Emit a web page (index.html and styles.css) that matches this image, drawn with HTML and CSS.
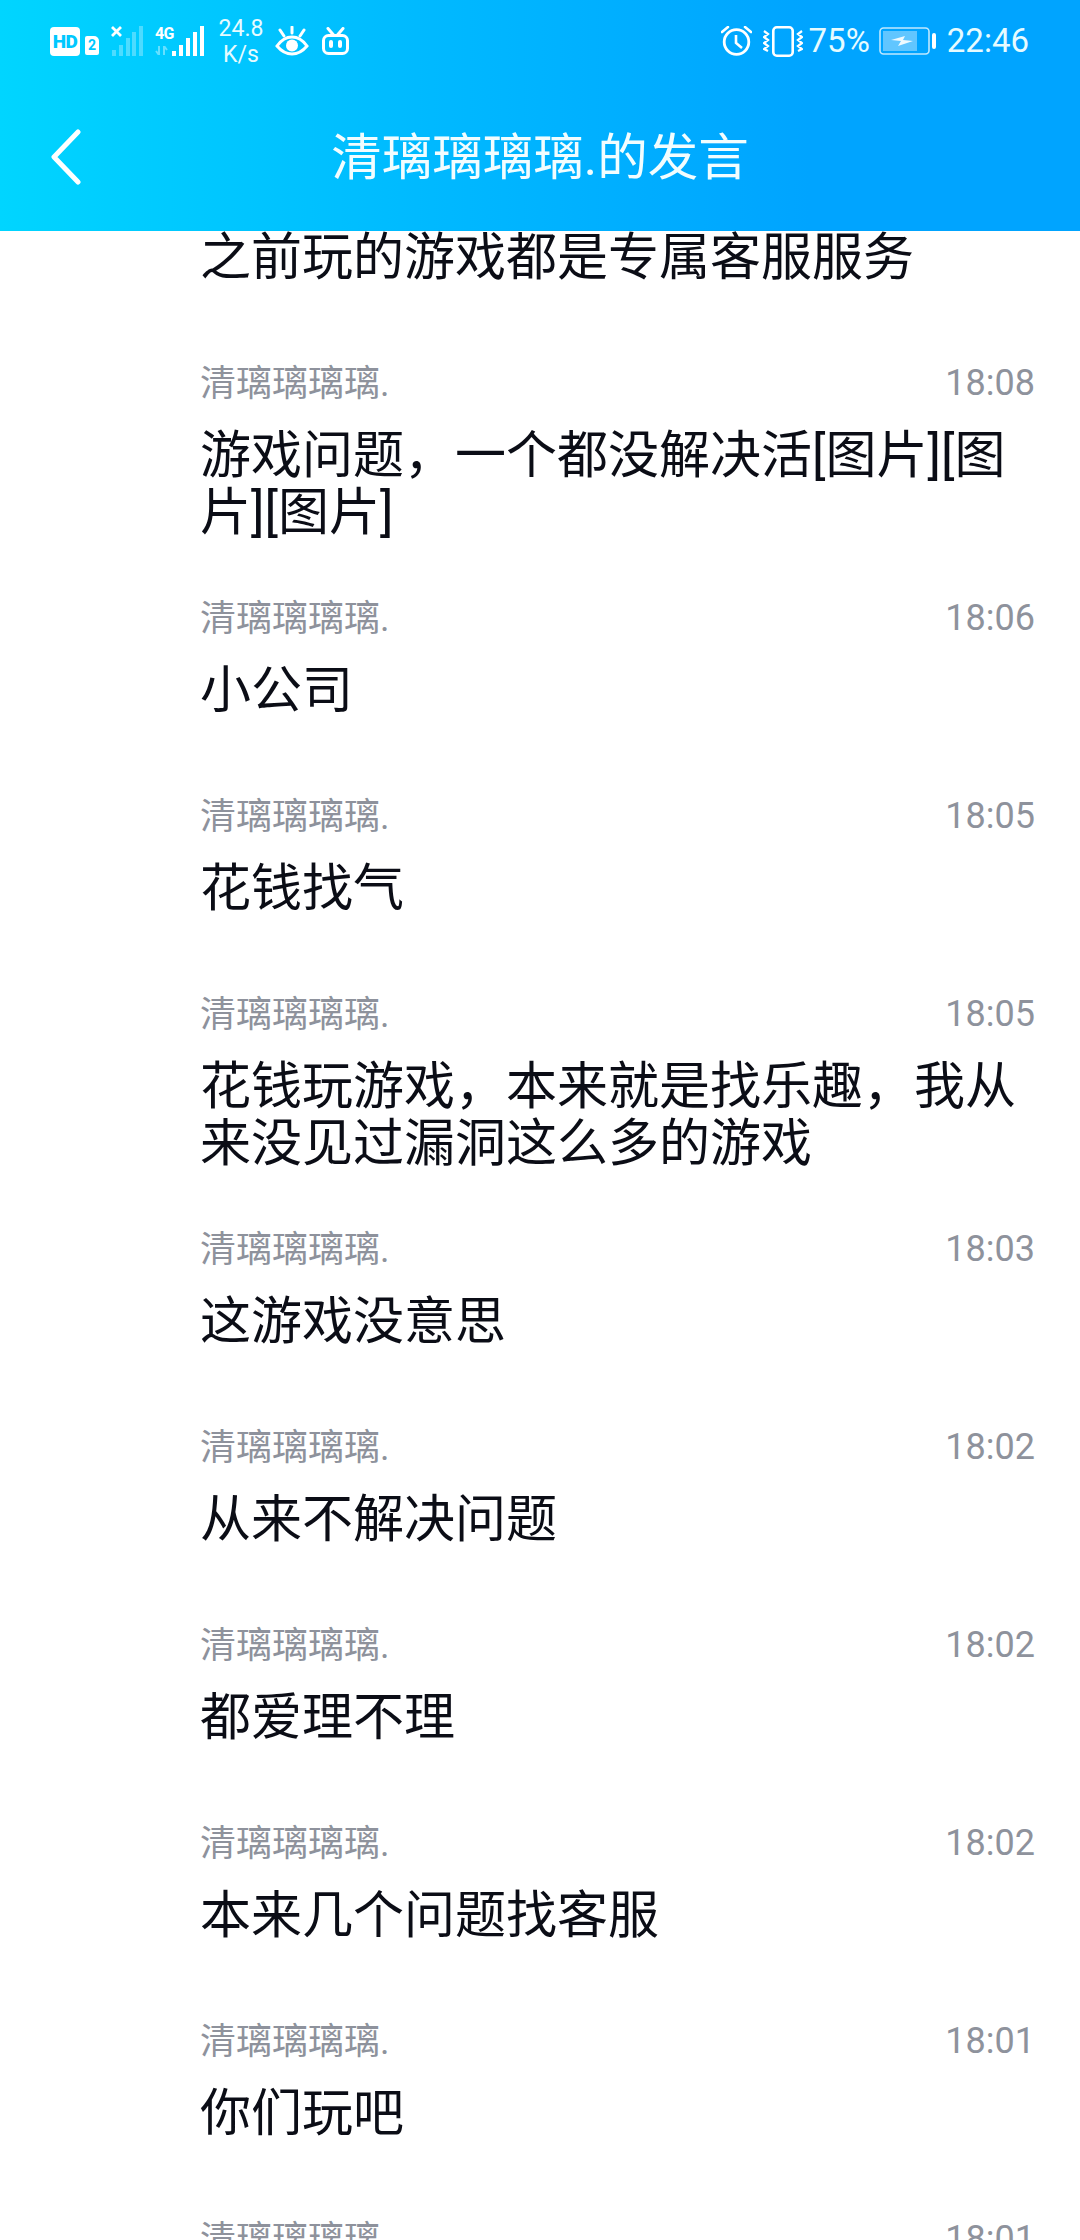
FILE: index.html
```html
<!DOCTYPE html>
<html lang="zh-CN">
<head>
<meta charset="utf-8">
<title>清璃璃璃璃.的发言</title>
<link rel="stylesheet" href="styles.css">
</head>
<body>
<div class="screen">
  <header class="header">
    <div class="status">
      <div class="status-left">
        <span class="hd">HD</span>
        <span class="sim">2</span>
        <svg class="sig1" width="32" height="30" viewBox="0 0 32 30">
          <path d="M1 1l9 9M10 1l-9 9" stroke="#fff" stroke-width="2.8" fill="none"/>
          <g fill="#fff" opacity=".3">
            <rect x="1" y="24" width="4" height="6"/><rect x="8" y="19" width="4" height="11"/><rect x="15" y="12" width="4" height="18"/><rect x="21" y="6" width="4" height="24"/><rect x="28" y="0" width="4" height="30"/>
          </g>
        </svg>
        <div class="sig2">
          <span class="fourg">4G</span>
          <svg class="arrows" width="14" height="9" viewBox="0 0 14 9"><path d="M4 0v9M1 5l3 4M9 9V0M9 0l3 4" stroke="#fff" stroke-width="2" fill="none" opacity=".4"/></svg>
        </div>
        <svg class="bars" width="32" height="30" viewBox="0 0 32 30">
          <g fill="#fff"><rect x="0" y="25" width="4" height="5"/><rect x="7" y="19" width="4" height="11"/><rect x="14" y="12" width="4" height="18"/><rect x="21" y="6" width="4" height="24"/><rect x="28" y="0" width="4" height="30"/></g>
        </svg>
        <div class="speed"><span>24.8</span><span>K/s</span></div>
        <svg class="eye" width="34" height="30" viewBox="0 0 34 30">
          <path d="M2 20C7 13 12 11 17 11s10 2 15 9c-5 6-10 8-15 8S7 26 2 20z" fill="none" stroke="#fff" stroke-width="3"/>
          <circle cx="17" cy="19.5" r="6" fill="#fff"/>
          <path d="M17 1v6M5 4l4 6M29 4l-4 6" stroke="#fff" stroke-width="3" fill="none" stroke-linecap="round"/>
        </svg>
        <svg class="bili" width="27" height="28" viewBox="0 0 27 28">
          <rect x="1.5" y="8.5" width="24" height="18" rx="5" fill="none" stroke="#fff" stroke-width="3"/>
          <path d="M6 1.5l6 7M21 1.5l-6 7" stroke="#fff" stroke-width="3" fill="none" stroke-linecap="round"/>
          <rect x="7" y="13" width="4" height="8" rx="2" fill="#fff"/><rect x="16" y="13" width="4" height="8" rx="2" fill="#fff"/>
        </svg>
      </div>
      <div class="status-right">
        <svg class="alarm" width="31" height="30" viewBox="0 0 31 30">
          <circle cx="15.5" cy="16" r="12.3" fill="none" stroke="#fff" stroke-width="2.8"/>
          <path d="M15 9v8l6 5" fill="none" stroke="#fff" stroke-width="2.6"/>
          <path d="M1 6l6-5M30 6l-6-5" stroke="#fff" stroke-width="2.6" fill="none" stroke-linecap="round"/>
        </svg>
        <svg class="vibrate" width="40" height="31" viewBox="0 0 40 31">
          <rect x="10.3" y="1.3" width="19.4" height="28.4" rx="3.5" fill="none" stroke="#fff" stroke-width="2.6"/>
          <path d="M1 5l4 3-4 3 4 3-4 3 4 3-4 3 4 2M39 5l-4 3 4 3-4 3 4 3-4 3 4 3-4 2" fill="none" stroke="#fff" stroke-width="2.2"/>
        </svg>
        <span class="pct">75%</span>
        <svg class="battery" width="58" height="28" viewBox="0 0 58 28">
          <rect x="1" y="1" width="49" height="26" rx="3.5" fill="none" stroke="#fff" stroke-opacity=".75" stroke-width="1.6"/>
          <rect x="4" y="4" width="34" height="20" fill="#fff" fill-opacity=".38"/>
          <path d="M12 13l14-4-2 4 10 1-15 5 3-5z" fill="#fff" fill-opacity=".9"/>
          <rect x="53" y="6" width="4" height="16" rx="2" fill="#fff"/>
        </svg>
        <span class="clock">22:46</span>
      </div>
    </div>
    <div class="titlebar">
      <svg class="back" width="30" height="56" viewBox="0 0 30 56">
        <path d="M27 3L3 28l24 25" fill="none" stroke="#fff" stroke-width="5" stroke-linecap="round" stroke-linejoin="round"/>
      </svg>
      <h1 class="title">清璃璃璃璃.的发言</h1>
    </div>
  </header>

  <main class="list">
    <article class="row row-first"><p class="text">之前玩的游戏都是专属客服服务</p></article>
    <article class="row"><div class="meta"><span class="name">清璃璃璃璃.</span><time class="time">18:08</time></div><p class="text">游戏问题，一个都没解决活[图片][图片][图片]</p></article>
    <article class="row"><div class="meta"><span class="name">清璃璃璃璃.</span><time class="time">18:06</time></div><p class="text">小公司</p></article>
    <article class="row"><div class="meta"><span class="name">清璃璃璃璃.</span><time class="time">18:05</time></div><p class="text">花钱找气</p></article>
    <article class="row"><div class="meta"><span class="name">清璃璃璃璃.</span><time class="time">18:05</time></div><p class="text">花钱玩游戏，本来就是找乐趣，我从来没见过漏洞这么多的游戏</p></article>
    <article class="row"><div class="meta"><span class="name">清璃璃璃璃.</span><time class="time">18:03</time></div><p class="text">这游戏没意思</p></article>
    <article class="row"><div class="meta"><span class="name">清璃璃璃璃.</span><time class="time">18:02</time></div><p class="text">从来不解决问题</p></article>
    <article class="row"><div class="meta"><span class="name">清璃璃璃璃.</span><time class="time">18:02</time></div><p class="text">都爱理不理</p></article>
    <article class="row"><div class="meta"><span class="name">清璃璃璃璃.</span><time class="time">18:02</time></div><p class="text">本来几个问题找客服</p></article>
    <article class="row"><div class="meta"><span class="name">清璃璃璃璃.</span><time class="time">18:01</time></div><p class="text">你们玩吧</p></article>
    <article class="row"><div class="meta"><span class="name">清璃璃璃璃.</span><time class="time">18:01</time></div></article>
  </main>
</div>
</body>
</html>
```
FILE: styles.css
```css
* { box-sizing: border-box; }
html, body { margin: 0; padding: 0; background: #fff; }
body { font-family: Roboto, "Noto Sans CJK SC", sans-serif; }
.screen { width: 1080px; height: 2240px; overflow: hidden; display: flex; flex-direction: column; }

.header {
  position: relative;
  z-index: 2;
  flex: none;
  height: 231px;
  background: linear-gradient(90deg, #00d5ff 0%, #00b9ff 40%, #00a4ff 75%, #00a4ff 100%);
  color: #fff;
}
.status { height: 80px; padding: 19px 51px 0 50px; display: flex; justify-content: space-between; align-items: flex-start; }
.status-left, .status-right { display: flex; align-items: center; height: 44px; }
.status-left svg, .status-right svg { flex: none; display: block; }

.hd {
  width: 30px; height: 29px; border-radius: 4px; background: #fff; color: #00c8ff;
  font: 900 19px/29px Roboto, sans-serif; text-align: center; letter-spacing: -.5px;
}
.sim {
  width: 14px; height: 19px; margin: 9px 0 0 5px; border-radius: 2px 5px 2px 2px; background: #fff; color: #00c8ff;
  font: 700 14px/19px Roboto, sans-serif; text-align: center;
}
.sig1 { margin-left: 12px; }
.sig2 { width: 17px; margin-left: 12px; height: 30px; display: flex; flex-direction: column; justify-content: space-between; }
.fourg { font: 700 16px/15px Roboto, sans-serif; color: #fff; letter-spacing: -.8px; }
.arrows { margin-bottom: 1px; }
.speed { width: 58px; margin: 2px 0 0 8px; display: flex; flex-direction: column; align-items: center; font: 400 23px/26px Roboto, sans-serif; color: #e6fbff; }
.eye { margin-left: 5px; }
.bili { margin-left: 13px; }

.vibrate { margin-left: 11px; }
.pct { margin-left: 6px; font: 400 33px/44px Roboto, sans-serif; color: #e6fbff; }
.battery { margin-left: 9px; }
.clock { margin-left: 10px; font: 400 33px/44px Roboto, sans-serif; color: #e6fbff; }

.titlebar { position: relative; height: 151px; padding-top: 5px; display: flex; align-items: center; justify-content: center; }
.back { position: absolute; left: 51px; top: 49px; }
.title { margin: 0; font-size: 50.5px; font-weight: 400; line-height: 60px; color: #f2fdff; }

.row { min-height: 198px; padding: 20px 45px 32px 200px; }
.row-first { min-height: 109px; margin-top: -2px; padding-top: 0; padding-bottom: 0; }
.row-first .text { margin-top: 0; }
.meta { height: 50px; display: flex; justify-content: space-between; align-items: center; }
.name { margin-top: 2px; font-size: 36px; line-height: 50px; color: #8e929c; }
.time { font: 400 36px/50px Roboto, sans-serif; color: #8e929c; }
.text { margin: 19px 0 0; font-size: 51px; line-height: 57px; color: #0b0d16; }
```
